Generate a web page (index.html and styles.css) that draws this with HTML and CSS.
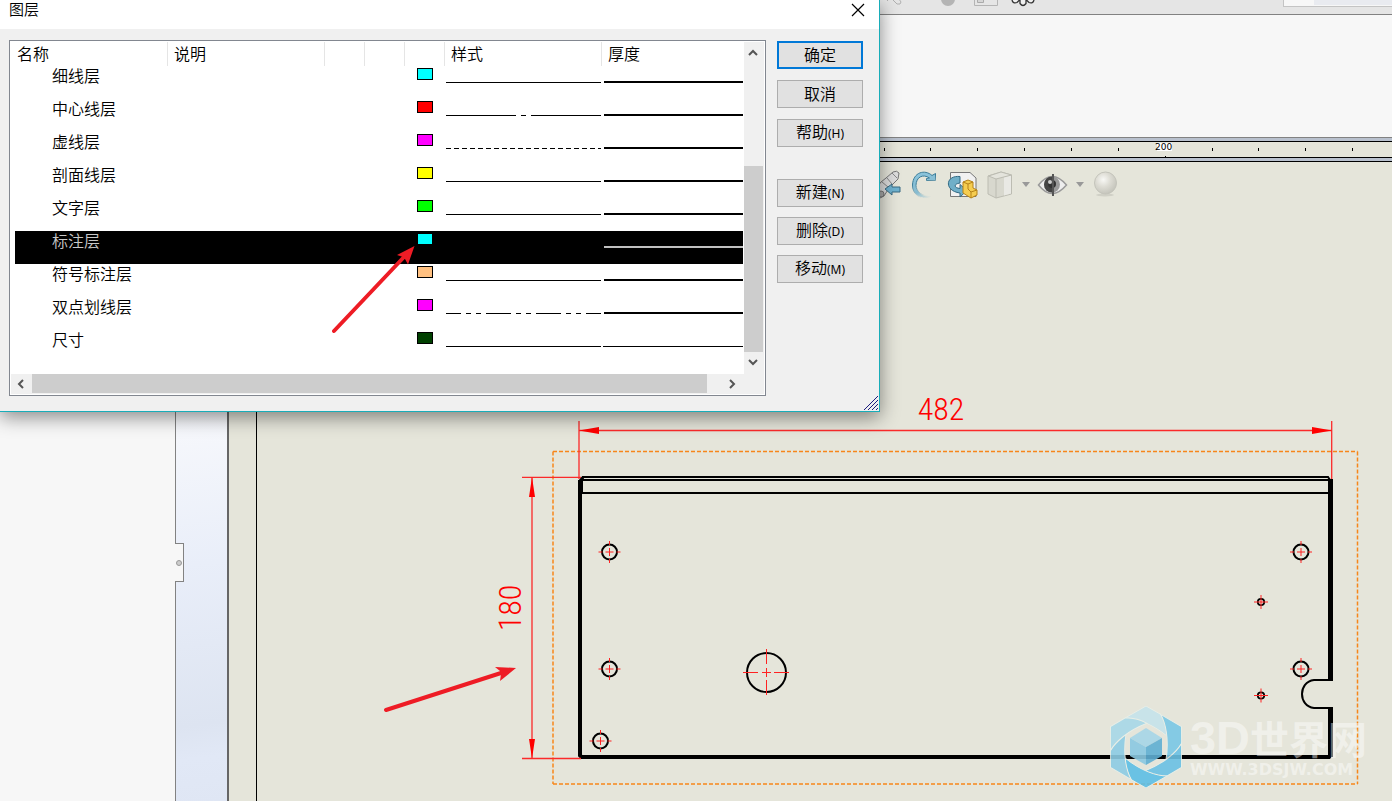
FILE: index.html
```html
<!DOCTYPE html>
<html lang="zh-CN">
<head>
<meta charset="utf-8">
<title>图层</title>
<link rel="stylesheet" href="styles.css">
</head>
<body>
<div class="app">
  <header class="menubar">
    <svg class="menubar-icons" width="160" height="14" viewBox="880 0 160 14" aria-hidden="true">
      <path d="M887 0l1 1M893 0l4 4 3 0 1-2-2-3" fill="none" stroke="#b0b0b0"/>
      <circle cx="948" cy="-1" r="7" fill="#b4b4b4"/>
      <path d="M974.500 0V5.500H997.500V0" fill="none" stroke="#b4b4b4"/>
      <path d="M977.500 0V2.500H983.500V0" fill="#d5d5d5" stroke="#aaa"/>
      <path d="M1012 0q1 4 5 2.500l2-2 1 0v3q3 4 6 0v-3l1 0 2 2q4 1.500 5-2.500" fill="#f0f0f0" stroke="#333" stroke-width="1.300"/>
    </svg>
    <div class="search-strip"><span></span></div>
  </header>
  <div class="ribbon"></div>
  <main class="workspace">
    <aside class="side-panel">
      <button class="panel-grip" aria-label="展开面板"><i></i></button>
    </aside>
    <div class="backdrop"></div>
    <section class="document">
      <div class="ruler">
        <svg width="100%" height="15" viewBox="229 142 1163 15" preserveAspectRatio="xMinYMin slice">
          <path d="M884.500 148v3M930.500 148v3M977.500 148v3M1024.500 148v3M1071.500 148v3M1118.500 148v3M1212.500 148v3M1258.500 148v3M1305.500 148v3M1352.500 148v3M1165.500 156v1" stroke="#000"/>
          <rect x="1157" y="143" width="15" height="8" fill="#fff"/>
          <text class="ruler-label" x="1155" y="150">200</text>
        </svg>
      </div>
      <div class="sheet">
        <svg class="drawing" viewBox="229 162 1163 639" preserveAspectRatio="xMinYMin meet">
          <defs>
            <g id="cross"><path d="M-11 0h4M-4 0h8M7 0h4M0-11v4M0-4v8M0 7v4" stroke="#f22"/></g>
            <g id="hole"><circle r="7.500" fill="none" stroke="#000" stroke-width="2"/><use href="#cross"/></g>
            <g id="pin"><circle r="3.200" fill="none" stroke="#000" stroke-width="1.800"/><path d="M-7 0h14M0-7v14" stroke="#f22"/></g>
          </defs>
          <path d="M256.500 162V801" stroke="#000"/>
          <path d="M553 451.500H1357.500M553 784H1357.500M553 451.500V784M1357.500 451.500V784" fill="none" stroke="#f7861a" stroke-width="1.500" stroke-dasharray="4 2"/>
          <g fill="none" stroke="#000">
            <path d="M582 477H1328l2 3M581 480H1330M582 493H1330" stroke-width="2"/>
            <path d="M582 479V494" stroke-width="2"/>
            <path d="M580 480V755.500L581.500 757H1329L1330 756" stroke-width="4"/>
            <path d="M580 481L583 477.500" stroke-width="3"/>
            <path d="M1330.500 479V681M1330.500 707V757" stroke-width="5"/>
            <path d="M1332 680H1314C1298 682 1298 706 1314 708H1332" stroke-width="2"/>
            <circle cx="766.500" cy="672.500" r="19.500" stroke-width="2"/>
          </g>
          <path d="M743 672.500h15M762 672.500h9M774 672.500h15M766.500 649v15M766.500 668v9M766.500 680v15" stroke="#f22"/>
          <use href="#hole" x="609.500" y="552"/><use href="#hole" x="609.500" y="669"/><use href="#hole" x="600.500" y="741"/>
          <use href="#hole" x="1301" y="552"/><use href="#hole" x="1301" y="669"/>
          <use href="#pin" x="1261" y="602"/><use href="#pin" x="1261" y="695.500"/>
          <g stroke="#fb2a2a" stroke-width="1.300" fill="none">
            <path d="M579 421V479M1331.700 421V479M579 430.500H1332M522 477.300H581M522 758.500H581M532 477V758"/>
          </g>
          <path d="M579 430.500L599 427V434ZM1332 430.500L1312 427V434ZM532 477L529 497H535ZM532 758.500L529 739H535Z" fill="#f00"/>
          <text class="dimension" x="941" y="420" text-anchor="middle">482</text>
          <text class="dimension" transform="translate(521 608) rotate(-90)" text-anchor="middle">180</text>
        </svg>
        <div class="view-toolbar">
          <button aria-label="剖面视图"><svg width="30" height="30" viewBox="872 168 30 30"><path d="M874 190L881 181 886 177 893 171Q897 169 899 172L898 178 889 187 884 195 878 198Z" fill="#ddd" stroke="#777"/><path d="M882 181l6 5M887 177l5 6M892 172l5 5" stroke="#888" fill="none"/><circle cx="881" cy="193" r="3" fill="#aaa" stroke="#777"/><path d="M885 188l7-5v3h8v5h-8v3z" fill="#6fb2d0" stroke="#386b83"/></svg></button>
          <button aria-label="旋转视图"><svg width="30" height="30" viewBox="908 168 30 30"><defs><linearGradient id="rot" gradientUnits="userSpaceOnUse" x1="915" y1="170" x2="928" y2="198"><stop stop-color="#8cc6de"/><stop offset=".65" stop-color="#86bbd0"/><stop offset="1" stop-color="#e5e5da"/></linearGradient><linearGradient id="rot-edge" gradientUnits="userSpaceOnUse" x1="915" y1="170" x2="926" y2="196"><stop offset=".4" stop-color="#397b98"/><stop offset=".95" stop-color="#e5e5da"/></linearGradient></defs><path d="M930 196.500C919 200 911 192 911.500 184C912 171 924 168 931 174.500L934.500 172.500V179.500H925.500V177.500L928.500 177C922 172.500 915 176 915 184.500C915 190 921 196 930 195Z" fill="url(#rot)" stroke="url(#rot-edge)"/></svg></button>
          <button aria-label="三维工程视图"><svg width="32" height="30" viewBox="946 168 32 30"><path d="M950.500 171.500H970L976 177V195.500H950.500Z" fill="#f1f1f1" stroke="#777"/><path d="M960 175.500C945 174 944 190 960 192V196L967 189.500 960 183.500V187.500C954 187 953 183 960 182Z" fill="#70afc8" stroke="#346b85"/><path d="M963 181l5-2 5 2v6l4 2v5l-6 3-8-5z" fill="#f5cd50" stroke="#b58218"/><path d="M963 181l5 2 5-2M968 183v5l3 3 6-2M971 191v6" fill="none" stroke="#b58218"/></svg></button>
          <button aria-label="显示样式"><svg width="30" height="30" viewBox="985 168 30 30"><path d="M988 175L1001 171 1011.500 174V193L996 197 988 193Z" fill="#d8d8ce" stroke="#bcbcb2"/><path d="M1004 176v18.500l7-2v-18z" fill="#e9e9e4"/><path d="M988.500 175L1001 171 1011.500 174 996 178Z" fill="#e4e4dc" stroke="#bcbcb2"/><path d="M996 178V197" stroke="#bcbcb2"/></svg></button>
          <button class="caret" aria-label="显示样式选项"></button>
          <button aria-label="隐藏/显示项目"><svg width="32" height="30" viewBox="1036 168 32 30"><path d="M1037.500 184Q1051 167 1065.500 184Q1051 201 1037.500 184Z" fill="#eee" stroke="#999" stroke-width="1.500"/><circle cx="1051" cy="183.500" r="8" fill="#999"/><path d="M1051 175.500a8 8 0 0 0 0 16z" fill="#444"/><circle cx="1051" cy="183" r="4" fill="#333"/><circle cx="1049" cy="181" r="2" fill="#ccc"/><path d="M1052 173V195" stroke="#555" stroke-width="2"/></svg></button>
          <button class="caret" aria-label="显示项目选项"></button>
          <button class="scene" aria-label="外观"><svg width="28" height="30" viewBox="1090 168 28 30"><defs><radialGradient id="ball" cx=".4" cy=".35" r=".65"><stop stop-color="#f8f8f5"/><stop offset=".5" stop-color="#dddcd4"/><stop offset="1" stop-color="#c5c5bc"/></radialGradient></defs><ellipse cx="1104" cy="194" rx="9" ry="1.500" fill="#d0d0c6"/><circle cx="1104.500" cy="182" r="11" fill="url(#ball)" stroke="#c4c4bb"/></svg></button>
        </div>
        <div class="watermark">
          <svg width="72" height="82" viewBox="-36 -41 72 82" aria-hidden="true">
            <defs><path id="blade" d="M-21-29L0-41L15-32.500C19-25 21-18 21-11C5-24-11-29-21-29Z"/></defs>
            <g stroke="#e9efe8">
              <use href="#blade" fill="#c5e3eb"/>
              <use href="#blade" fill="#7ac8e6" transform="rotate(60)"/>
              <use href="#blade" fill="#6bc1e4" transform="rotate(120)"/>
              <use href="#blade" fill="#5dbfe6" transform="rotate(180)"/>
              <use href="#blade" fill="#8dcce4" transform="rotate(240)"/>
              <use href="#blade" fill="#a7d8e8" transform="rotate(300)"/>
            </g>
            <path d="M0-19L16-9 0 0-16-9Z" fill="#a6d6e8"/><path d="M-16-9L0 0V18L-16 9Z" fill="#8bc9e2"/><path d="M16-9V9L0 18V0Z" fill="#60afd3"/>
          </svg>
          <div class="watermark-copy"><div class="watermark-name"><b>3D</b>世界网</div><div class="watermark-url">WWW.3DSJW.COM</div></div>
        </div>
      </div>
    </section>
  </main>
</div>

<div class="dialog" role="dialog" aria-labelledby="dialog-title">
  <div class="titlebar">
    <span id="dialog-title">图层</span>
    <button class="close" aria-label="关闭"><svg width="14" height="14" viewBox="0 0 14 14"><path d="M1 1L13 13M13 1L1 13" stroke="#000" stroke-width="1.200"/></svg></button>
  </div>
  <div class="dialog-body">
    <div class="listbox">
      <div class="list-view">
        <table>
          <colgroup><col class="c-wide"><col class="c-wide"><col class="c-icon"><col class="c-icon"><col class="c-icon"><col class="c-wide"><col></colgroup>
          <thead><tr><th>名称</th><th>说明</th><th></th><th></th><th></th><th>样式</th><th>厚度</th></tr></thead>
          <tbody>
            <tr><td>细线层</td><td></td><td></td><td></td><td><i class="swatch cyan"></i></td><td><i class="line"></i></td><td><i class="weight"></i></td></tr>
            <tr><td>中心线层</td><td></td><td></td><td></td><td><i class="swatch red"></i></td><td><i class="line center"></i></td><td><i class="weight"></i></td></tr>
            <tr><td>虚线层</td><td></td><td></td><td></td><td><i class="swatch magenta"></i></td><td><i class="line dashed"></i></td><td><i class="weight"></i></td></tr>
            <tr><td>剖面线层</td><td></td><td></td><td></td><td><i class="swatch yellow"></i></td><td><i class="line"></i></td><td><i class="weight"></i></td></tr>
            <tr><td>文字层</td><td></td><td></td><td></td><td><i class="swatch lime"></i></td><td><i class="line"></i></td><td><i class="weight"></i></td></tr>
            <tr class="selected"><td>标注层</td><td></td><td></td><td></td><td><i class="swatch cyan"></i></td><td><i class="line"></i></td><td><i class="weight"></i></td></tr>
            <tr><td>符号标注层</td><td></td><td></td><td></td><td><i class="swatch orange"></i></td><td><i class="line"></i></td><td><i class="weight"></i></td></tr>
            <tr><td>双点划线层</td><td></td><td></td><td></td><td><i class="swatch magenta"></i></td><td><i class="line phantom"></i></td><td><i class="weight"></i></td></tr>
            <tr><td>尺寸</td><td></td><td></td><td></td><td><i class="swatch green"></i></td><td><i class="line"></i></td><td><i class="weight thin"></i></td></tr>
          </tbody>
        </table>
        <div class="scroll vertical">
          <button aria-label="向上滚动"><svg width="12" height="12" viewBox="0 0 12 12"><path d="M1 8L5 4L9 8"/></svg></button>
          <div class="thumb"></div>
          <button aria-label="向下滚动"><svg width="12" height="12" viewBox="0 0 12 12"><path d="M1 3L5 7L9 3"/></svg></button>
        </div>
      </div>
      <div class="scroll horizontal">
        <button aria-label="向左滚动"><svg width="12" height="12" viewBox="0 0 12 12"><path d="M7 2L3 6L7 10"/></svg></button>
        <div class="thumb"></div>
        <button aria-label="向右滚动"><svg width="12" height="12" viewBox="0 0 12 12"><path d="M3 2L7 6L3 10"/></svg></button>
      </div>
    </div>
    <div class="actions">
      <div class="action-group primary">
        <button class="default">确定</button>
        <button>取消</button>
        <button>帮助<small>(H)</small></button>
      </div>
      <div class="action-group">
        <button>新建<small>(N)</small></button>
        <button>删除<small>(D)</small></button>
        <button>移动<small>(M)</small></button>
      </div>
    </div>
  </div>
  <svg class="resize" width="16" height="16" viewBox="0 0 16 16" aria-hidden="true"><path d="M1 15L15 1M5 15L15 5M9 15L15 9M13 15L15 13" stroke="#1c1c80"/></svg>
</div>

<svg class="callouts" viewBox="0 0 1392 801" preserveAspectRatio="xMinYMin meet" aria-hidden="true">
  <g stroke="#ee1c25" stroke-width="4" stroke-linecap="round"><path d="M334 331L404 257M386 710L501 673"/></g>
  <path d="M414.500 246L397 255 403 257 405 259 408 264.500ZM516 668L495 667 500 671 501 674 500 681Z" fill="#ee1c25"/>
</svg>
</body>
</html>
```
FILE: styles.css
```css
* { box-sizing: border-box; }
html, body { height: 100%; }
body {
  margin: 0;
  overflow: hidden;
  background: #f7f7f7;
  color: #000;
  font: 350 16px/18px "Noto Sans CJK SC", sans-serif;
}
button { font: inherit; color: inherit; border: 0; padding: 0; background: none; }
svg { display: block; }

/* application window */
.app { height: 100vh; display: flex; flex-direction: column; }
.menubar {
  height: 15px;
  flex: none;
  display: flex;
  justify-content: space-between;
  padding-left: 880px;
  background: #e5e5e5;
  border-bottom: 1px solid #828282;
}
.menubar-icons { flex: none; }
.search-strip {
  width: 109px;
  height: 7px;
  padding-left: 30px;
  background: #f7f7f7;
  border: solid #c4c4c4;
  border-width: 0 0 1px 1px;
}
.search-strip span { display: block; height: 5px; background: #e9ebf0; }
.ribbon { height: 122px; flex: none; background: #f7f7f7; }
.workspace { flex: 1; min-height: 0; display: flex; border-top: 1px solid #828282; }
.side-panel {
  position: relative;
  width: 176px;
  flex: none;
  background: #f7f7f7;
  border-right: 1px solid #828282;
}
.panel-grip {
  position: absolute;
  left: 175px;
  top: 405px;
  width: 9px;
  height: 39px;
  background: #f7f7f7;
  border: solid #828282;
  border-width: 1px 1px 1px 0;
}
.panel-grip i {
  display: block;
  width: 6px;
  height: 6px;
  margin-left: 1px;
  border: 1px solid #999;
  border-radius: 50%;
  background: #ccc;
}
.backdrop {
  width: 53px;
  flex: none;
  background: linear-gradient(172deg, #f8f9fc 40%, #e9eef9 64%, #dde4f1 88%, #e1e8f6 93%, #dfe6f4);
  border-right: 2px solid #666;
}
.document { flex: 1; min-width: 0; display: flex; flex-direction: column; }
.ruler {
  flex: none;
  background: #e5e5da;
  border: solid #000;
  border-width: 1px 0;
  outline: 3px solid #b9c1ce;
  margin: 3px 0;
}
.ruler-label { font: 400 9px "DejaVu Sans", sans-serif; }
.sheet { position: relative; flex: 1; min-height: 0; background: #e5e5da; border-top: 1px solid #000; }
.drawing { width: 100%; height: 100%; }
.dimension { font: 300 32px "Liberation Sans Narrow", "Roboto Condensed", "Lato", sans-serif; fill: #f00; }

/* view toolbar floating over the sheet */
.view-toolbar { position: absolute; left: 643px; top: 7px; display: flex; gap: 7px; }
.view-toolbar .caret { width: 8px; display: flex; align-items: center; justify-content: center; }
.view-toolbar .caret::before { content: ""; border: 4px solid transparent; border-top: 5px solid #999; border-bottom: 0; }

/* watermark */
.watermark { position: absolute; right: 25px; bottom: 13px; display: flex; gap: 8px; opacity: .9; }
.watermark-copy { color: rgba(255, 255, 255, .5); white-space: nowrap; }
.watermark-name { font: 700 39px/40px "Noto Sans CJK SC", sans-serif; padding-top: 11px; }
.watermark-name b { font: 700 47px/40px "Liberation Sans", sans-serif; }
.watermark-url { font: 700 16px/24px "DejaVu Sans", sans-serif; }

/* layer dialog */
.dialog {
  position: absolute;
  left: 0;
  top: 0;
  width: 880px;
  background: #f0f0f0;
  border: solid #18adb9;
  border-width: 0 1px 1px 0;
  box-shadow: 0 5px 18px rgba(0, 0, 0, .45);
}
.titlebar {
  display: flex;
  justify-content: space-between;
  height: 29px;
  padding: 0 14px 0 9px;
  background: #fff;
  font-size: 15px;
}
.close { height: 20px; }
.dialog-body { display: flex; gap: 11px; padding: 11px 16px 15px 9px; }
.listbox { flex: 1; min-width: 0; padding: 1px; background: #fff; border: 1px solid #828790; }
.list-view { display: flex; height: 332px; }
table { flex: 1; width: 0; height: 321px; margin-right: 1px; table-layout: fixed; border-collapse: separate; border-spacing: 0; }
.c-wide { width: 157px; }
.c-icon { width: 40px; }
th, td { padding: 0; text-align: left; vertical-align: top; font-weight: 350; }
th { height: 24px; padding: 2px 0 0 6px; border-right: 1px solid #e5e5e5; }
th:last-child { border-right: 0; }
td { height: 33px; white-space: nowrap; }
td:first-child { padding-left: 41px; }
.selected { background: linear-gradient(to right, #fff 4px, #000 4px); color: #c8c8c8; }
.swatch { display: block; width: 16px; height: 12px; margin: 2px 0 0 12px; border: 1px solid #000; }
.cyan { background: #0ff; }
.red { background: #f00; }
.magenta { background: #f0f; }
.yellow { background: #ff0; }
.lime { background: #0f0; }
.orange { background: #ffc080; }
.green { background: #004000; }
.line { display: block; height: 1px; margin: 16px 1px 0 1px; background: #000; }
.center { background: linear-gradient(to right, #000 70px, #fff 70px 75px, #000 75px 80px, #fff 80px 85px, #000 85px); }
.dashed { background: repeating-linear-gradient(to right, #000 0 5px, #fff 5px 8px); }
.phantom { background: repeating-linear-gradient(to right, #000 0 15px, #fff 15px 20px, #000 20px 25px, #fff 25px 30px, #000 30px 35px, #fff 35px 40px, #000 40px 50px); }
.selected .line { background: #000; }
.weight { display: block; height: 2px; margin: 15px 0 0 2px; background: #000; }
.selected .weight { background: #c0c0c0; }
.weight.thin { height: 1px; margin: 16px 0 0 1px; }

.scroll { display: flex; background: #f0f0f0; }
.scroll button { display: flex; align-items: center; justify-content: center; flex: none; }
.scroll path { fill: none; stroke: #555; stroke-width: 2; }
.thumb { background: #cdcdcd; }
.vertical { width: 20px; flex: none; flex-direction: column; padding-right: 1px; }
.vertical button { height: 22px; }
.vertical .thumb { height: 186px; margin-top: auto; }
.horizontal { height: 20px; padding-bottom: 1px; }
.horizontal button { width: 21px; }
.horizontal .thumb { width: 675px; margin-right: 15px; }

.actions { width: 86px; flex: none; padding-top: 1px; }
.action-group { display: flex; flex-direction: column; gap: 10px; }
.primary { gap: 11px; margin-bottom: 32px; }
.actions button { height: 28px; padding-bottom: 2px; background: #e1e1e1; border: 1px solid #adadad; }
.actions .default { border: 2px solid #0078d7; }
.actions small { font: 400 12px/18px "Noto Sans", sans-serif; }
.resize { position: absolute; right: 0; bottom: 0; }

.callouts { position: absolute; left: 0; top: 0; width: 100%; pointer-events: none; }
```
